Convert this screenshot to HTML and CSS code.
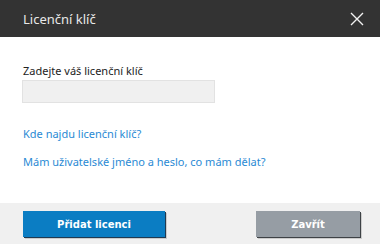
FILE: index.html
```html
<!DOCTYPE html>
<html>
<head>
    <title>Licenční klíč</title>
    <link rel="stylesheet" href="styles.css">
</head>
<body>
    <div class="dialog">
        <div class="header">
            <span class="title">Licenční klíč</span>
            <button class="close" aria-label="Zavřít">
                <svg width="14" height="14" viewBox="0 0 14 14">
                    <path d="M1 1 L13 13 M13 1 L1 13" stroke="#f2f2f2" stroke-width="1.4" fill="none"/>
                </svg>
            </button>
        </div>

        <div class="content">
            <label class="field-label" for="licenseKey">Zadejte váš licenční klíč</label>
            <input type="text" id="licenseKey" class="key-input">

            <a href="#" class="help-link first">Kde najdu licenční klíč?</a>
            <a href="#" class="help-link">Mám uživatelské jméno a heslo, co mám dělat?</a>
        </div>

        <div class="footer">
            <button class="btn primary">Přidat licenci</button>
            <button class="btn secondary">Zavřít</button>
        </div>
    </div>
</body>
</html>
```

FILE: styles.css
```css
body {
    margin: 0;
    font-family: "Noto Sans", "Open Sans", sans-serif;
    background-color: #fff;
}

.dialog {
    width: 380px;
    height: 244px;
    display: flex;
    flex-direction: column;
}

.header {
    height: 37px;
    background-color: #333333;
    display: flex;
    align-items: center;
    justify-content: space-between;
    padding: 0 16px 0 23px;
}

.title {
    color: #e8e8e8;
    font-size: 13px;
}

.close {
    background: none;
    border: none;
    padding: 0;
    width: 14px;
    height: 14px;
    cursor: pointer;
}

.close svg {
    display: block;
}

.content {
    flex: 1;
    display: flex;
    flex-direction: column;
    align-items: flex-start;
    padding: 26px 23px 0 23px;
}

.field-label {
    font-size: 11px;
    color: #222;
    margin-bottom: 2px;
}

.key-input {
    width: 193px;
    height: 23px;
    box-sizing: border-box;
    margin: 0 0 0 -1px;
    border: 1px solid #e2e2e2;
    background-color: #f0f0f0;
    outline: none;
}

.help-link {
    color: #2a8ad4;
    font-size: 11px;
    text-decoration: none;
    margin-top: 13px;
}

.help-link.first {
    margin-top: 23px;
}

.footer {
    height: 41px;
    box-sizing: border-box;
    background-color: #f0f0f0;
    display: flex;
    justify-content: space-between;
    align-items: flex-start;
    padding: 8px 20px 0 23px;
}

.btn {
    height: 26px;
    border: none;
    color: #fff;
    font-family: "DejaVu Sans", sans-serif;
    font-weight: bold;
    font-size: 10px;
    cursor: pointer;
}

.primary {
    width: 142px;
    background-color: #0b7dc3;
    box-shadow: 1px 1px 0 #1f3a52, 2px 2px 0 rgba(0, 0, 0, 0.15);
}

.secondary {
    width: 104px;
    background-color: #969da4;
    box-shadow: 1px 1px 0 #3e4246, 2px 2px 0 rgba(0, 0, 0, 0.15);
}
```
